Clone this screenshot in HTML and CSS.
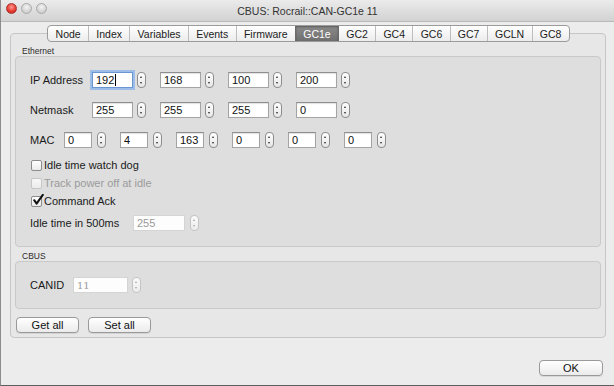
FILE: index.html
```html
<!DOCTYPE html>
<html>
<head>
<meta charset="utf-8">
<link rel="stylesheet" href="styles.css">
</head>
<body>
<div class="window">
  <div class="titlebar">
    <div class="lights">
      <span class="light red"></span>
      <span class="light"></span>
      <span class="light"></span>
    </div>
    <div class="title">CBUS: Rocrail::CAN-GC1e 11</div>
  </div>
  <div class="content">
    <div class="tabwidget">
      <div class="tabbar">
        <span class="tab">Node</span>
        <span class="tab">Index</span>
        <span class="tab">Variables</span>
        <span class="tab">Events</span>
        <span class="tab">Firmware</span>
        <span class="tab active">GC1e</span>
        <span class="tab">GC2</span>
        <span class="tab">GC4</span>
        <span class="tab">GC6</span>
        <span class="tab">GC7</span>
        <span class="tab">GCLN</span>
        <span class="tab">GC8</span>
      </div>
      <div class="pane">
        <div class="grouplabel">Ethernet</div>
        <div class="group eth">
          <div class="row ip">
            <span class="label w62">IP Address</span>
            <span class="field"><span class="input w41 focus">192<span class="caret"></span></span><span class="spin"></span></span>
            <span class="field"><span class="input w41">168</span><span class="spin"></span></span>
            <span class="field"><span class="input w41">100</span><span class="spin"></span></span>
            <span class="field"><span class="input w41">200</span><span class="spin"></span></span>
          </div>
          <div class="row ip">
            <span class="label w62">Netmask</span>
            <span class="field"><span class="input w41">255</span><span class="spin"></span></span>
            <span class="field"><span class="input w41">255</span><span class="spin"></span></span>
            <span class="field"><span class="input w41">255</span><span class="spin"></span></span>
            <span class="field"><span class="input w41">0</span><span class="spin"></span></span>
          </div>
          <div class="row mac">
            <span class="label w34">MAC</span>
            <span class="field"><span class="input w28">0</span><span class="spin"></span></span>
            <span class="field"><span class="input w28">4</span><span class="spin"></span></span>
            <span class="field"><span class="input w28">163</span><span class="spin"></span></span>
            <span class="field"><span class="input w28">0</span><span class="spin"></span></span>
            <span class="field"><span class="input w28">0</span><span class="spin"></span></span>
            <span class="field"><span class="input w28">0</span><span class="spin"></span></span>
          </div>
          <div class="checks">
            <div class="check"><span class="box"></span>Idle time watch dog</div>
            <div class="check disabled"><span class="box"></span>Track power off at idle</div>
            <div class="check"><span class="box checked"><svg width="13" height="13" viewBox="0 0 13 13"><path d="M2.2 6.2 L4.6 9.6 L10.8 0.8" fill="none" stroke="#111" stroke-width="2" stroke-linecap="round" stroke-linejoin="round"/></svg></span>Command Ack</div>
          </div>
          <div class="row idle">
            <span class="label w103">Idle time in 500ms</span>
            <span class="field"><span class="input w52 dis">255</span><span class="spin dis"></span></span>
          </div>
        </div>
        <div class="grouplabel second">CBUS</div>
        <div class="group cbus">
          <div class="row">
            <span class="label w43">CANID</span>
            <span class="field"><span class="input w55 dis serif">11</span><span class="spin dis"></span></span>
          </div>
        </div>
        <div class="actions">
          <button class="btn w62b">Get all</button>
          <button class="btn w62b">Set all</button>
        </div>
      </div>
    </div>
    <div class="footer">
      <button class="btn ok">OK</button>
    </div>
  </div>
</div>
</body>
</html>
```

FILE: styles.css
```css
html, body {
  margin: 0;
  padding: 0;
}
body {
  width: 614px;
  height: 386px;
  overflow: hidden;
  font-family: "Liberation Sans", Arial, sans-serif;
  font-size: 11px;
  color: #1a1a1a;
  background: #ececec;
}
.window {
  height: 386px;
  box-sizing: border-box;
  border-left: 1px solid #8c8c8c;
  border-bottom: 1px solid #5e5e5e;
  display: flex;
  flex-direction: column;
  background: #ececec;
}
.titlebar {
  position: relative;
  height: 22px;
  box-sizing: border-box;
  background: linear-gradient(#ebebeb, #d2d2d2);
  border-bottom: 1px solid #b9b9b9;
  display: flex;
  align-items: center;
  justify-content: center;
}
.lights {
  position: absolute;
  left: 5px;
  top: 3px;
  display: flex;
  gap: 4px;
}
.light {
  width: 11px;
  height: 11px;
  border-radius: 50%;
  box-sizing: border-box;
  border: 1px solid #a9a9a9;
  background: radial-gradient(circle at 50% 35%, #f4f4f4, #cfcfcf 70%);
}
.light.red {
  border-color: #a83a36;
  background: radial-gradient(circle at 50% 35%, #ff9d92, #e6352b 60%, #b3231b);
}
.title {
  font-size: 10.5px;
  color: #333;
  margin-top: 1px;
}
.content {
  flex: 1;
  display: flex;
  flex-direction: column;
  padding: 3px 8px 0 9px;
}
.tabwidget {
  display: flex;
  flex-direction: column;
}
.tabbar {
  align-self: center;
  position: relative;
  z-index: 1;
  display: flex;
  height: 17px;
  box-sizing: border-box;
  border: 1px solid #9b9b9b;
  border-radius: 4px;
  background: linear-gradient(#ffffff, #ececec);
  margin-bottom: -9px;
  margin-left: 1px;
  overflow: hidden;
}
.tab {
  display: flex;
  align-items: center;
  padding: 0 7.3px;
  font-size: 10.5px;
  color: #1c1c1c;
  border-left: 1px solid #bdbdbd;
}
.tab:first-child {
  border-left: none;
}
.tab.active {
  background: linear-gradient(#8b8b8b, #6f6f6f);
  color: #fff;
  border-left-color: #6a6a6a;
  box-shadow: inset 0 1px 2px rgba(0,0,0,0.35);
}
.tab.active + .tab {
  border-left-color: #6a6a6a;
}
.pane {
  border: 1px solid #c6c6c6;
  border-radius: 4px;
  background: #e7e7e7;
  padding: 12px 4px 4px 4px;
  display: flex;
  flex-direction: column;
}
.grouplabel {
  font-size: 8.5px;
  line-height: 10px;
  height: 10px;
  color: #2d2d2d;
  padding-left: 7px;
}
.grouplabel.second {
  margin-top: 4px;
}
.group {
  border: 1px solid #c9c9c9;
  border-radius: 4px;
  background: #dedede;
  padding: 15px 14px 15px 14px;
  display: flex;
  flex-direction: column;
}
.group.eth {
  padding-bottom: 15px;
}
.row {
  display: flex;
  align-items: center;
  height: 16px;
}
.row.ip + .row.ip,
.row.ip + .row.mac {
  margin-top: 14px;
}
.label {
  flex: none;
}
.w62 { width: 62px; }
.w34 { width: 34px; }
.w103 { width: 103px; }
.w43 { width: 43px; }
.field {
  display: flex;
  align-items: center;
  flex: none;
}
.row.ip .field { margin-right: 14px; }
.row.mac .field { margin-right: 14px; }
.input {
  height: 16px;
  box-sizing: border-box;
  border: 1px solid #a4a4a4;
  border-top-color: #8e8e8e;
  background: #fff;
  box-shadow: inset 0 1px 1px rgba(0,0,0,0.12);
  padding-left: 3px;
  display: flex;
  align-items: center;
  font-size: 11px;
  color: #111;
}
.input.focus {
  border-color: #6a95d2;
  box-shadow: 0 0 0 2px #9dbde9;
}
.caret {
  display: inline-block;
  width: 1px;
  height: 12px;
  background: #000;
  margin-left: 1px;
}
.input.dis {
  color: #9a9a9a;
  border-color: #d4d4d4;
  box-shadow: none;
  background: #fdfdfd;
}
.input.serif {
  font-family: "DejaVu Serif", "Liberation Serif", serif;
  font-size: 10px;
}
.w41 { width: 41px; }
.w28 { width: 28px; }
.w52 { width: 52px; }
.w55 { width: 55px; }
.spin {
  position: relative;
  width: 9px;
  height: 16px;
  box-sizing: border-box;
  margin-left: 4px;
  border: 1px solid #8d8d8d;
  border-radius: 4px;
  background: linear-gradient(#ffffff, #e6e6e6);
}
.row.mac .spin { margin-left: 5px; }
.spin::before,
.spin::after {
  content: "";
  position: absolute;
  left: 1.5px;
  width: 0;
  height: 0;
  border-left: 1.5px solid transparent;
  border-right: 1.5px solid transparent;
}
.spin::before {
  top: 3px;
  border-bottom: 2px solid #2a2a2a;
}
.spin::after {
  bottom: 3px;
  border-top: 2px solid #2a2a2a;
}
.spin.dis {
  border-color: #c4c4c4;
  background: linear-gradient(#fafafa, #ececec);
}
.spin.dis::before { border-bottom-color: #a8a8a8; }
.spin.dis::after { border-top-color: #a8a8a8; }
.checks {
  margin-top: 8px;
  display: flex;
  flex-direction: column;
}
.check {
  height: 18px;
  display: flex;
  align-items: center;
  font-size: 11px;
}
.box {
  position: relative;
  width: 11px;
  height: 11px;
  box-sizing: border-box;
  margin-left: 1px;
  margin-right: 2px;
  border: 1px solid #8c8c8c;
  border-radius: 2px;
  background: linear-gradient(#ffffff, #ebebeb);
}
.check.disabled {
  color: #9b9b9b;
}
.check.disabled .box {
  border-color: #c6c6c6;
  background: linear-gradient(#f7f7f7, #ececec);
}
.box.checked svg {
  position: absolute;
  left: 0;
  top: -3px;
}
.row.idle {
  margin-top: 5px;
}
.row.idle .spin { margin-left: 5px; }
.actions {
  display: flex;
  gap: 9px;
  margin-top: 8px;
  padding-left: 1px;
}
.btn {
  height: 16px;
  box-sizing: border-box;
  border: 1px solid #999;
  border-radius: 4px;
  background: linear-gradient(#ffffff, #ebebeb);
  font-family: "Liberation Sans", Arial, sans-serif;
  font-size: 11px;
  color: #111;
  padding: 0;
  line-height: 14px;
  box-shadow: 0 1px 0 rgba(0,0,0,0.08);
}
.w62b { width: 63px; }
.footer {
  display: flex;
  justify-content: flex-end;
  margin-top: 22px;
  padding-right: 3px;
}
.ok {
  width: 64px;
}
```
